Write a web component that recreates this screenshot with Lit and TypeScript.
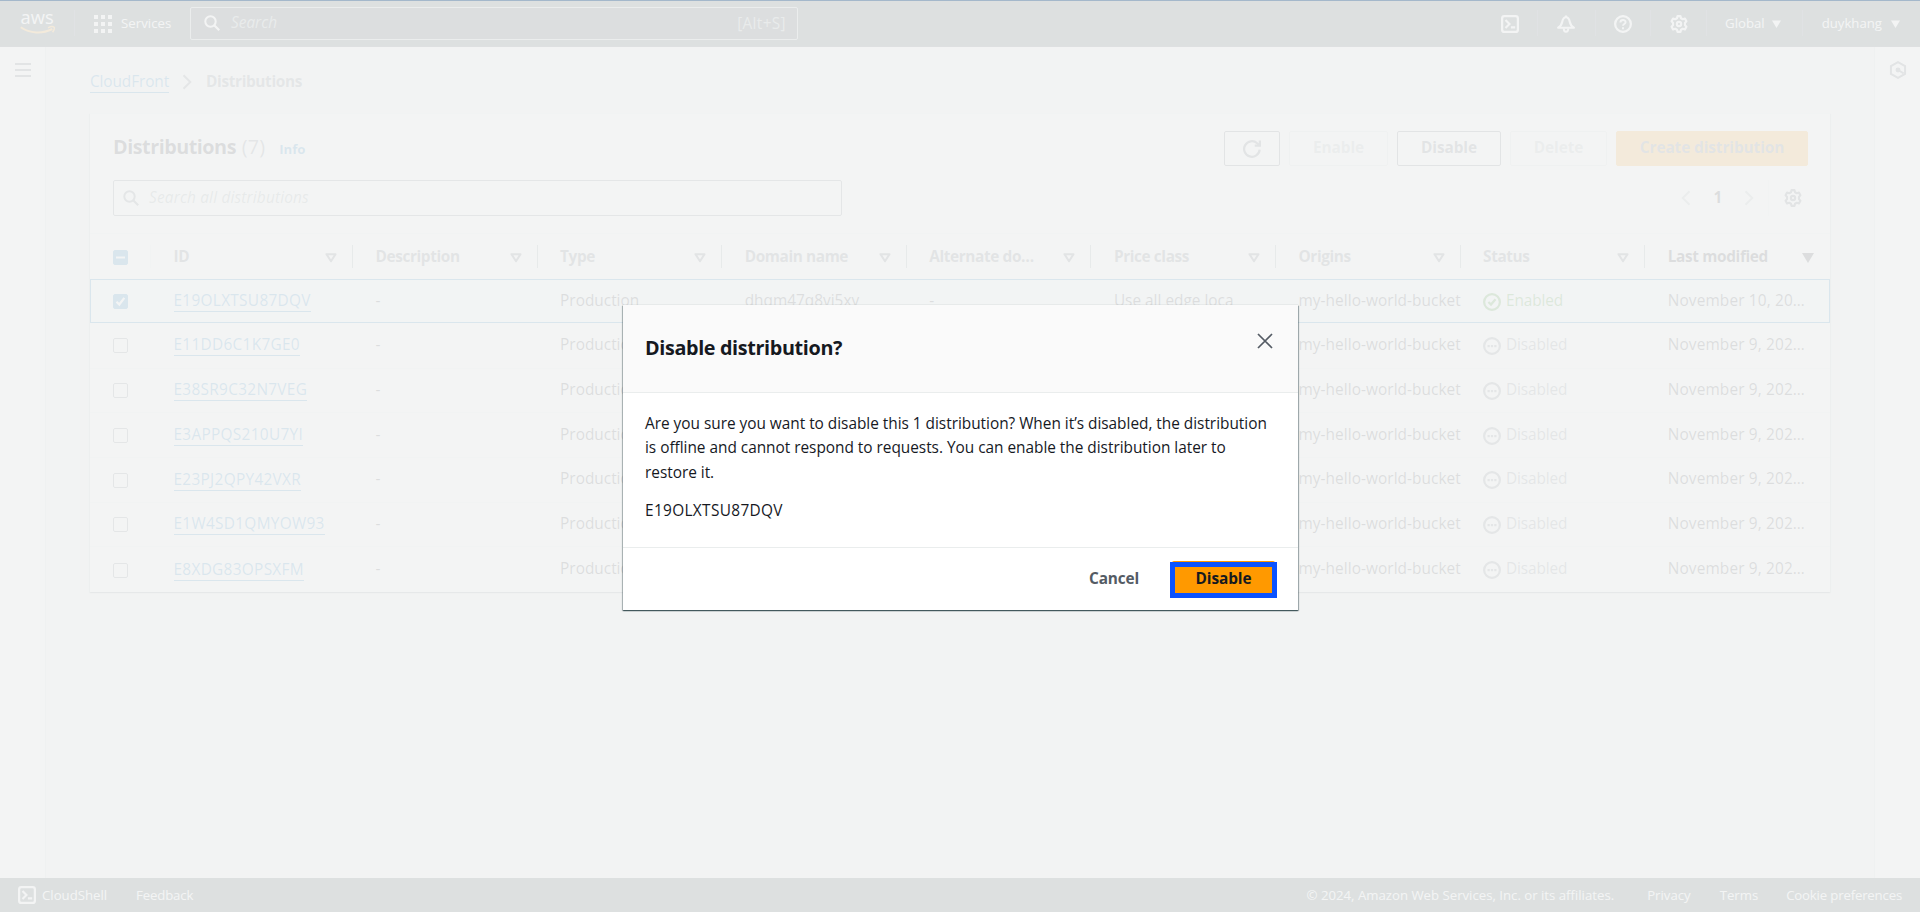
import { LitElement, html, css, svg } from "lit";

interface Row {
  id: string;
  domain: string;
  enabled: boolean;
  modified: string;
}

const COLUMNS = ["ID", "Description", "Type", "Domain name", "Alternate do…", "Price class", "Origins", "Status", "Last modified"];

const off = (id: string): Row => ({ id, domain: "", enabled: false, modified: "November 9, 202…" });

const ROWS: Row[] = [
  { id: "E19OLXTSU87DQV", domain: "dhqm47q8vi5xy", enabled: true, modified: "November 10, 20…" },
  off("E11DD6C1K7GE0"),
  off("E38SR9C32N7VEG"),
  off("E3APPQS210U7YI"),
  off("E23PJ2QPY42VXR"),
  off("E1W4SD1QMYOW93"),
  off("E8XDG83OPSXFM"),
];

const icon = (body: unknown, size = 18) =>
  html`<svg class="icon" width=${size} height=${size} viewBox="0 0 16 16" fill="none" stroke="currentColor" stroke-width="2">${body}</svg>`;

const gear = svg`<g transform="translate(8 8)"><path stroke-width="1.9" stroke-linejoin="round" d="M-1.3-7h2.600l.5 1.900 1.600.9 1.900-.6 1.300 2.300L5.300-1v2l1.300 1.500-1.300 2.300-1.900-.6-1.600.9L1.300 7h-2.600l-.5-1.900-1.600-.9-1.900.6-1.300-2.300L-5.300 1v-2l-1.300-1.500 1.300-2.300 1.900.6 1.600-.9z"/><circle r="1.900" stroke-width="1.900"/></g>`;
const search = svg`<circle cx="6.500" cy="6.500" r="5.200"/><path stroke-width="2.200" d="M10.200 10.200l5 5"/>`;
const shell = svg`<rect x="1" y="1" width="14" height="14" rx="2"/><path stroke-width="1.900" d="M4 4.500L7.500 8 4 11.500M8.800 11h3.800"/>`;
const bell = svg`<path stroke-width="1.900" stroke-linejoin="round" d="M8 .5v1.500M1 11.300C3.700 9.800 4.200 8.200 4.600 6.200 5.100 3.500 6.300 2 8 2s2.900 1.500 3.400 4.200c.4 2 .9 3.600 3.600 5.100z"/><path stroke-width="1.700" d="M6 12c0 3.900 4 3.900 4 0"/>`;
const help = svg`<circle cx="8" cy="8" r="7"/><path stroke-width="1.700" d="M5.700 6.600C5.700 3.700 10.300 3.800 10.300 6.400 10.300 8 8 8 8 9.600M8 10.900v1.800"/>`;
const refresh = svg`<path d="M14.800 8.500A6.900 6.900 0 1 1 12.600 2.900L15 5"/><path d="M15 .5V5h-4.600"/>`;
const chevronR = svg`<path d="M4.500 1.200L11.300 8l-6.800 6.800"/>`;
const chevronL = svg`<path d="M11.500 1.200L4.700 8l6.800 6.800"/>`;
const okIcon = svg`<circle cx="8" cy="8" r="7"/><path d="M4.800 8l2.300 2.300 4-4.800"/>`;
const offIcon = svg`<circle cx="8" cy="8" r="7"/><path d="M4 8h2M7 8h2M10 8h2"/>`;
const hexIcon = svg`<path stroke-width="1.800" d="M8 1l6.300 3.600v6.800L8 15l-6.300-3.600V4.600z"/><circle cx="8" cy="8" r="2.200" fill="currentColor" stroke="none"/><path stroke-width="1.600" d="M8 8l5 3"/>`;
const sortEmpty = html`<svg class="sort" width="12" height="10" viewBox="0 0 12 10"><path d="M1.500 1.200h9L6 8.200z" fill="none" stroke="currentColor" stroke-width="2" stroke-linejoin="round"/></svg>`;
const sortFull = html`<svg class="sort" width="12" height="10" viewBox="0 0 12 10"><path d="M0 0h12L6 10z" fill="currentColor"/></svg>`;
const caret = html`<svg class="caret" width="9" height="8" viewBox="0 0 9 8"><path d="M0 .5h9L4.500 8z" fill="currentColor"/></svg>`;

class AppRoot extends LitElement {
  static styles = css`
    :host { display: block; height: 912px; position: relative; overflow: hidden; background: #f2f3f3;
      font: 15.4px/22px "Open Sans", "Noto Sans", sans-serif; color: #16191f; }
    * { box-sizing: border-box; }
    .icon, .sort, .caret { display: block; flex: none; }
    .page { height: 912px; display: flex; flex-direction: column; }

    .top { height: 47px; flex: none; background: #203639; border-bottom: 1px solid #31363f; color: #fff; display: flex; align-items: center; font-size: 13.2px; }
    .sep { width: 1px; height: 26px; background: #414d5c; flex: none; }
    .logo { width: 36px; height: 26px; margin: 0 18px 0 20px; display: block; overflow: visible; }
    .grid9 { display: grid; grid-template-columns: repeat(3, 4px); row-gap: 3px; justify-content: space-between; width: 18px; margin: 2px 9px 0 19px; }
    .grid9 i { width: 4px; height: 4px; background: #fff; }
    .svc { width: 51px; letter-spacing: .05px; margin-right: 18px; }
    .find { width: 608px; height: 33px; border: 1px solid #aab7b8; border-radius: 2px; background: #1a202b; display: flex; align-items: center; padding: 0 11px 0 13px; font-size: 15.4px; color: #95a5a6; }
    .find .icon { color: #fff; }
    .find em { margin-left: 11px; flex: 1; }
    .find span { letter-spacing: .35px; margin-top: 1px; }
    .tools { margin-left: auto; display: flex; align-items: center; height: 46px; }
    .tools .icon { margin-top: 2px; }
    .drop { display: flex; align-items: center; }
    .drop span { margin-top: -1px; }
    .drop .caret { margin: 1px 0 0 7px; }
    .drop.user { margin-right: 20px; }
    .drop.user .caret { margin-left: 9px; }
    .gap-a { margin: 0 19px 0 18px; }
    .gap-b { margin: 0 18px 0 20px; }
    .gap-c { margin: 0 18px; }
    .gap-d { margin: 0 19px 0 18px; }
    .gap-e { margin: 0 19px 0 21px; }

    .mid { flex: 1; display: flex; min-height: 0; }
    .rail { width: 46px; background: #fff; border-right: 1px solid #d5dbdb; padding: 16px 0 0 15px; color: #545b64; flex: none; }
    .rail.right { border-right: 0; border-left: 1px solid #d5dbdb; padding: 14px 0 0 14px; }
    .bars { width: 16px; height: 14px; display: flex; flex-direction: column; justify-content: space-between; }
    .bars i { height: 2px; background: #545b64; }
    .main { flex: 1; padding: 24px 44px 0; min-width: 0; }
    .crumbs { display: flex; align-items: center; height: 22px; }
    .link { color: #0073bb; line-height: 20px; border-bottom: 1px solid #0073bb; display: inline-block; }
    .crumbs .link { letter-spacing: -.11px; }
    .crumbs .icon { margin: 0 11px 0 10px; color: #687078; }
    .crumbs b { color: #687078; letter-spacing: -.36px; }

    .card { margin-top: 20px; background: #fff; height: 479px; border-top: 1px solid #eaeded; box-shadow: 0 1px 1px rgba(0,28,36,.3), 1px 1px 1px rgba(0,28,36,.15), -1px 1px 1px rgba(0,28,36,.15); }
    .head { display: flex; align-items: flex-start; padding: 17px 22px 0 23px; height: 66px; }
    h1 { margin: 0; font-size: 19.8px; line-height: 32px; letter-spacing: -.49px; font-weight: 700; }
    h1 span { font-weight: 400; color: #687078; letter-spacing: .2px; margin-left: 1px; }
    .info { color: #0073bb; font-weight: 700; font-size: 13.2px; margin: 7px 0 0 14px; }
    .acts { margin-left: auto; display: flex; gap: 9px; }
    .btn { height: 35px; border: 1px solid #545b64; border-radius: 2px; font-weight: 700; color: #545b64; display: flex; align-items: center; justify-content: center; padding-bottom: 1px; letter-spacing: -.1px; }
    .btn.na { border-color: #d5dbdb; color: #aab7b8; }
    .btn.primary { background: #ff9900; border-color: #ff9900; }
    .w-r { width: 56px; padding: 0; } .w-e { width: 99px; } .w-d { width: 104px; } .w-x { width: 97px; } .w-c { width: 192px; }

    .tool { display: flex; align-items: center; padding: 0 28px 0 23px; height: 36px; }
    .filter { width: 729px; height: 36px; border: 1px solid #687078; border-radius: 2px; display: flex; align-items: center; padding-left: 9px; color: #687078; }
    .filter em { margin: -1px 0 0 10px; color: #879596; letter-spacing: .17px; }
    .pager { margin-left: auto; display: flex; align-items: center; color: #aab7b8; }
    .pager b { margin: -1px 17px 0 18px; color: #16191f; width: 12px; text-align: center; }
    .pager .line { width: 1px; height: 36px; background: #eaeded; margin: 0 15px 0 11px; }
    .pager .gear { color: #545b64; }

    .row { display: grid; grid-template-columns: 61px 202px repeat(7, 184.6px) 1fr; height: 44.7px; border-bottom: 1px solid #eaeded; align-items: center; }
    .row.hdr { height: 46px; margin-top: 17px; border-top: 1px solid #eaeded; border-bottom: 0; background: #fafafa; font-weight: 700; color: #545b64; letter-spacing: -.4px; }
    .row.sel { height: 44px; outline: 1px solid #0073bb; background: #f1faff; outline-offset: -1px; border: 0; }
    .row.sel + .row { height: 45.500px; }
    .row:last-child { border-bottom: 0; }
    .cell { padding: 0 0 0 22.500px; white-space: nowrap; display: flex; align-items: center; min-width: 0; }
    .cell > span { margin-top: -1px; }
    .cell .link { letter-spacing: .3px; margin-top: 1px; }
    .cell.clip { overflow: hidden; }
    .hdr .cell { height: 23px; border-right: 1px solid #879596; padding-right: 15px; justify-content: space-between; }
    .hdr .cell > span { margin-top: 0; }
    .hdr .cell:first-child { border-color: #eaeded; }
    .hdr .cell:last-child { border: 0; color: #16191f; padding-right: 16px; letter-spacing: -.35px; }
    .sort { margin-top: 2px; }
    .box { width: 15px; height: 15px; border: 1px solid #687078; border-radius: 2px; background: #fff; margin-top: 1px; }
    .box.on { background: #0073bb; border-color: #0073bb; }
    .box svg { display: block; }
    .ok { color: #1d8102; } .no { color: #687078; }
    .stat .icon { margin: 1px 5px 0 0; }
    .stat span { letter-spacing: -.15px; }
    .date { letter-spacing: .15px; }
    .origin { letter-spacing: .06px; }

    .foot { height: 34px; flex: none; background: #203639; color: #fff; font-size: 13.2px; display: flex; align-items: center; padding: 0 18px; }
    .foot span { margin-top: -1px; }
    .foot .icon { margin-right: 6px; }
    .foot .fb { margin-left: 29px; letter-spacing: -.15px; }
    .foot .cp { margin-left: auto; }
    .foot .pv { margin-left: 33px; } .foot .tm { margin-left: 29px; } .foot .ck { margin-left: 28px; letter-spacing: -.17px; }

    .veil { position: absolute; inset: 0; background: rgba(242,243,243,.9); }
    .edge { position: absolute; left: 0; right: 0; top: 0; height: 1px; background: #a4b8cb; }

    .modal { position: absolute; left: 623px; top: 305px; width: 675px; height: 305px; background: #fff; display: flex; flex-direction: column;
      box-shadow: 0 0 1px rgba(0,28,36,.25), 0 1px 1px rgba(0,28,36,.5), 1px 1px 1px rgba(0,28,36,.25), -1px 1px 1px rgba(0,28,36,.2); }
    .m-head { height: 88px; background: #fafafa; border-bottom: 1px solid #eaeded; padding: 27px 25px 0 22px; display: flex; justify-content: space-between; }
    h2 { margin: 0; font-size: 19.8px; line-height: 32px; letter-spacing: -.36px; }
    .m-head svg { display: block; margin-top: 1px; }
    .m-body { height: 155px; border-bottom: 1px solid #eaeded; padding: 19px 22px 0; line-height: 24.3px; }
    .m-body p { margin: 0 0 14.500px; letter-spacing: -.02px; }
    .m-body .idline { letter-spacing: .34px; }
    .m-foot { flex: 1; display: flex; justify-content: flex-end; align-items: flex-start; padding: 13px 23px 0 0; font-weight: 700; }
    .cancel { color: #545b64; margin: 7px 33px 0 0; letter-spacing: -.15px; }
    .go { position: relative; width: 103px; height: 36px; background: #ff9900; border-radius: 2px; text-align: center; line-height: 35px; letter-spacing: -.1px; }
    .ring { position: absolute; left: -2px; top: 1px; width: 107px; height: 36px; border: 5px solid #0a52ff; }
  `;

  row(r: Row, first: boolean) {
    return html`<div class="row ${first ? "sel" : ""}">
      <div class="cell">${first
        ? html`<div class="box on"><svg width="13" height="13" viewBox="0 0 13 13"><path d="M2.500 6.800l2.800 2.700 5-6.600" fill="none" stroke="#fff" stroke-width="2.200"/></svg></div>`
        : html`<div class="box"></div>`}</div>
      <div class="cell"><span class="link">${r.id}</span></div>
      <div class="cell"><span>-</span></div>
      <div class="cell"><span>Production</span></div>
      <div class="cell"><span>${r.domain}</span></div>
      <div class="cell"><span>-</span></div>
      <div class="cell"><span>Use all edge loca</span></div>
      <div class="cell clip"><span class="origin">my-hello-world-bucket</span></div>
      <div class="cell stat ${r.enabled ? "ok" : "no"}">${icon(r.enabled ? okIcon : offIcon)}<span>${r.enabled ? "Enabled" : "Disabled"}</span></div>
      <div class="cell date"><span>${r.modified}</span></div>
    </div>`;
  }

  render() {
    return html`
      <div class="page">
        <header class="top">
          <svg class="logo" viewBox="0 0 36 26">
            <text x="0.600" y="14" font-size="19" textLength="33" lengthAdjust="spacingAndGlyphs" fill="#fff">aws</text>
            <path d="M.8 17.300c9 6.300 21.500 6.800 31.500 1.700" fill="none" stroke="#ff9900" stroke-width="2"/>
            <path d="M28 17.800c2-1 5-1.300 6-.6s0 3-1.400 5" fill="none" stroke="#ff9900" stroke-width="1.500"/>
          </svg>
          <i class="sep"></i>
          <div class="grid9">${Array.from({ length: 9 }, () => html`<i></i>`)}</div>
          <span class="svc">Services</span>
          <div class="find">${icon(search, 16)}<em>Search</em><span>[Alt+S]</span></div>
          <div class="tools">
            ${icon(shell)}<i class="sep gap-a"></i>${icon(bell)}<i class="sep gap-b"></i>${icon(help)}<i class="sep gap-d"></i>${icon(gear)}<i class="sep gap-c"></i>
            <div class="drop"><span>Global</span>${caret}</div><i class="sep gap-e"></i>
            <div class="drop user"><span>duykhang</span>${caret}</div>
          </div>
        </header>
        <div class="mid">
          <div class="rail"><div class="bars"><i></i><i></i><i></i></div></div>
          <main class="main">
            <div class="crumbs"><span class="link">CloudFront</span>${icon(chevronR, 16)}<b>Distributions</b></div>
            <section class="card">
              <div class="head">
                <h1>Distributions <span>(7)</span></h1><span class="info">Info</span>
                <div class="acts">
                  <div class="btn w-r">${icon(refresh)}</div>
                  <div class="btn na w-e">Enable</div>
                  <div class="btn w-d">Disable</div>
                  <div class="btn na w-x">Delete</div>
                  <div class="btn primary w-c">Create distribution</div>
                </div>
              </div>
              <div class="tool">
                <div class="filter">${icon(search, 16)}<em>Search all distributions</em></div>
                <div class="pager">${icon(chevronL, 16)}<b>1</b>${icon(chevronR, 16)}<i class="line"></i><span class="gear">${icon(gear)}</span></div>
              </div>
              <div class="row hdr">
                <div class="cell"><div class="box on"><svg width="13" height="13" viewBox="0 0 13 13"><path d="M2 6.500h9" stroke="#fff" stroke-width="2"/></svg></div></div>
                ${COLUMNS.map((c, i) => html`<div class="cell"><span>${c}</span>${i === COLUMNS.length - 1 ? sortFull : sortEmpty}</div>`)}
              </div>
              ${ROWS.map((r, i) => this.row(r, i === 0))}
            </section>
          </main>
          <div class="rail right">${icon(hexIcon)}</div>
        </div>
        <footer class="foot">
          ${icon(shell)}<span>CloudShell</span><span class="fb">Feedback</span>
          <span class="cp">© 2024, Amazon Web Services, Inc. or its affiliates.</span>
          <span class="pv">Privacy</span><span class="tm">Terms</span><span class="ck">Cookie preferences</span>
        </footer>
      </div>
      <div class="veil"></div>
      <div class="edge"></div>
      <div class="modal" role="dialog">
        <div class="m-head">
          <h2>Disable distribution?</h2>
          <svg width="16" height="16" viewBox="0 0 16 16"><path d="M1 1l14 14M15 1L1 15" stroke="#545b64" stroke-width="1.700" fill="none"/></svg>
        </div>
        <div class="m-body">
          <p>Are you sure you want to disable this 1 distribution? When it’s disabled, the distribution<br />is offline and cannot respond to requests. You can enable the distribution later to<br />restore it.</p>
          <p class="idline">E19OLXTSU87DQV</p>
        </div>
        <div class="m-foot"><span class="cancel">Cancel</span><div class="go">Disable<i class="ring"></i></div></div>
      </div>`;
  }
}
customElements.define("app-root", AppRoot);
